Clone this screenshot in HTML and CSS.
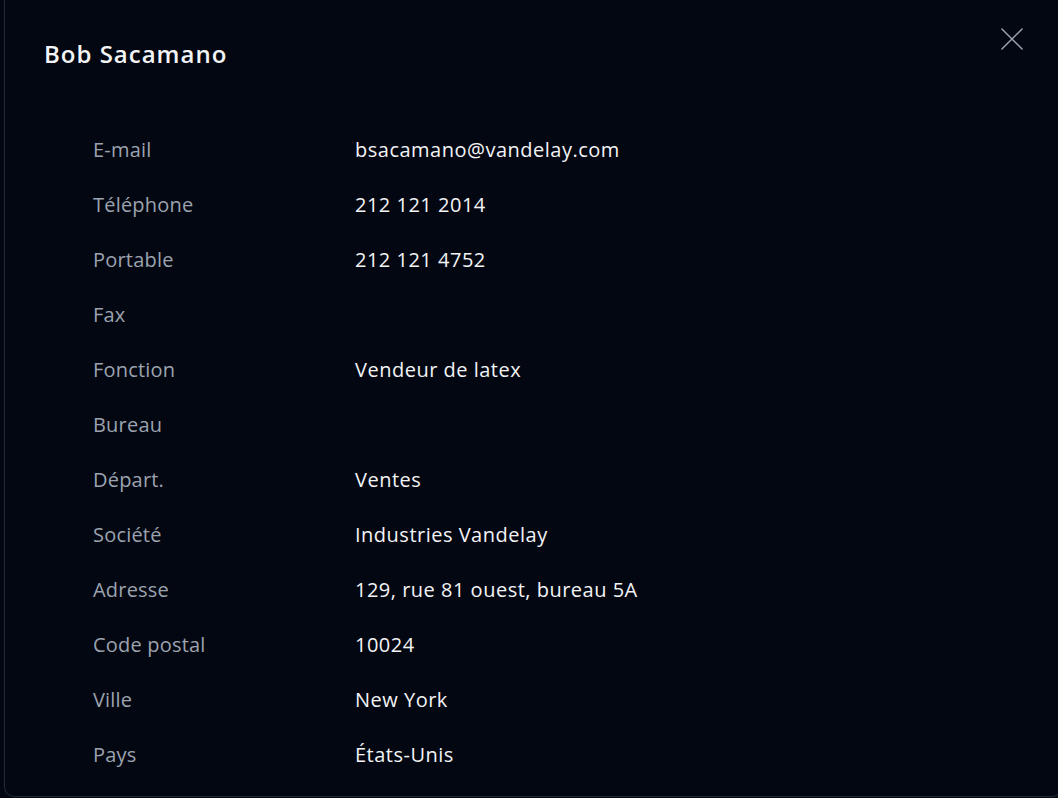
FILE: index.html
```html
<!DOCTYPE html>
<html lang="fr">
<head>
<meta charset="utf-8">
<link rel="stylesheet" href="styles.css">
</head>
<body>
<div class="dialog">
  <header class="dialog-head">
    <h2 class="title">Bob Sacamano</h2>
    <button class="close" aria-label="Fermer">
      <svg width="24" height="24" viewBox="0 0 24 24" fill="none" stroke="currentColor" stroke-width="1.6" stroke-linecap="round"><path d="M1 1L23 23M23 1L1 23"/></svg>
    </button>
  </header>
  <dl class="fields">
    <div class="row"><dt>E-mail</dt><dd>bsacamano@vandelay.com</dd></div>
    <div class="row"><dt>Téléphone</dt><dd>212 121 2014</dd></div>
    <div class="row"><dt>Portable</dt><dd>212 121 4752</dd></div>
    <div class="row"><dt>Fax</dt><dd></dd></div>
    <div class="row"><dt>Fonction</dt><dd>Vendeur de latex</dd></div>
    <div class="row"><dt>Bureau</dt><dd></dd></div>
    <div class="row"><dt>Départ.</dt><dd>Ventes</dd></div>
    <div class="row"><dt>Société</dt><dd>Industries Vandelay</dd></div>
    <div class="row"><dt>Adresse</dt><dd>129, rue 81 ouest, bureau 5A</dd></div>
    <div class="row"><dt>Code postal</dt><dd>10024</dd></div>
    <div class="row"><dt>Ville</dt><dd>New York</dd></div>
    <div class="row"><dt>Pays</dt><dd>États-Unis</dd></div>
  </dl>
</div>
</body>
</html>
```
FILE: styles.css
```css
html, body {
  margin: 0;
  padding: 0;
  background: #030712;
  overflow: hidden;
  height: 798px;
}
body {
  font-family: "Open Sans", "Noto Sans", sans-serif;
  color: #f3f4f6;
}
.dialog {
  box-sizing: border-box;
  margin-left: 4px;
  width: 1058px;
  height: 797px;
  background: #030712;
  border: 1px solid #1f2937;
  border-top: none;
  border-radius: 0 0 10px 10px;
  padding: 0 0 0 39px;
}
.dialog-head {
  display: flex;
  justify-content: space-between;
  align-items: flex-start;
  height: 122px;
}
.title {
  margin: 38px 0 0;
  font-size: 24px;
  font-weight: 600;
  line-height: 32px;
  letter-spacing: 1px;
  color: #f3f4f6;
}
.close {
  margin: 28px 38px 0 0;
  padding: 0;
  border: 0;
  background: none;
  color: #9ca3af;
  width: 22px;
  height: 22px;
  display: flex;
}
.close svg { width: 22px; height: 22px; }
.fields {
  margin: 0;
  padding-left: 49px;
}
.row {
  display: grid;
  grid-template-columns: 262px 1fr;
  height: 55px;
  align-items: center;
  font-size: 20px;
  line-height: 28px;
  letter-spacing: 0.5px;
}
.row dt { color: #9ca3af; letter-spacing: 0.2px; }
.row dd { margin: 0; color: #f3f4f6; }
```
